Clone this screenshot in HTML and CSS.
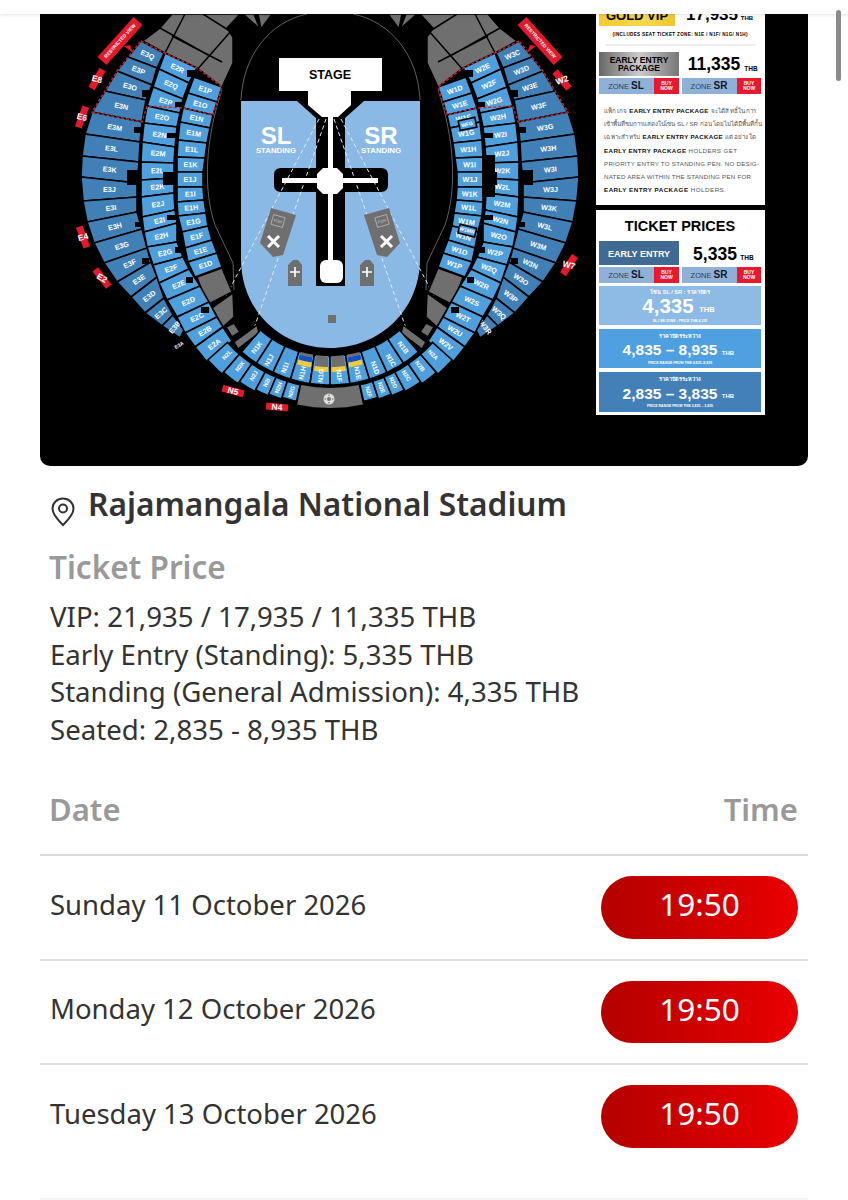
FILE: index.html
```html
<!DOCTYPE html>
<html lang="en">
<head>
  <meta charset="UTF-8" />
  <meta name="viewport" content="width=device-width, initial-scale=1.0"/>
  <title>Rajamangala National Stadium</title>
  <link rel="stylesheet" href="styles.css">
</head>
<body>

<div class="topbar"></div>
<div class="scroll-thumb"></div>

<div class="container">
  <div class="seatmap">
    <svg class="map-svg" viewBox="40 14 768 452" width="768" height="452">
      <defs>
        <linearGradient id="gold" x1="0" x2="1" y1="0" y2="0">
          <stop offset="0" stop-color="#f7c92e"/><stop offset="0.6" stop-color="#f6d94e"/><stop offset="1" stop-color="#efc52f"/>
        </linearGradient>
        <linearGradient id="silver" x1="0" x2="1" y1="0" y2="0">
          <stop offset="0" stop-color="#666"/><stop offset="0.5" stop-color="#ccc"/><stop offset="1" stop-color="#777"/>
        </linearGradient>
      </defs>

      <!-- field -->
      <path class="field" d="M241 101H297L316 118V168H281Q274 168 274 175V185Q274 192 281 192H316V286H345V192H381Q388 192 388 185V175Q388 168 381 168H345V118L364 101H420V259C420 310 380 348 330 348C280 348 241 310 241 259Z"/>
      <path class="oval" d="M241 100C243 55 270 22 307 14M420 100C418 55 391 22 353 14"/>
      <path class="oval" d="M222 90C205 140 203 190 215 225L233 263L234 290M438 90C455 140 457 190 445 225L427 263L426 290"/>

      <!-- dashed lines from stage -->
      <path class="dash" d="M319 119L217 313M326 119L250 340M341 119L443 313M334 119L410 340"/>

      <!-- stage and catwalks -->
      <path class="white" d="M279 58H382V91H351V105L338 117H322L308 105V91H279Z"/>
      <rect class="white" x="282" y="178" width="96" height="5"/>
      <rect class="white" x="328" y="117" width="5" height="145"/>
      <path class="white" d="M323 168H337L343 174V188L337 194H323L317 188V174Z"/>
      <rect class="white" x="320" y="260" width="23" height="23" rx="6"/>
      <text class="t-stage" x="330" y="78.500">STAGE</text>

      <text class="t-zone" x="276" y="144">SL</text>
      <text class="t-standing" x="276" y="152.500">STANDING</text>
      <text class="t-zone" x="381" y="144">SR</text>
      <text class="t-standing" x="381" y="152.500">STANDING</text>

      <!-- foh towers -->
      <path class="grey" d="M271 208L296 215L283 255L273 257L260 243Z"/>
      <rect class="foh-box" x="272" y="216" width="12" height="10" transform="rotate(16 278 221)"/>
      <text class="t-foh" x="278" y="222.500" transform="rotate(16 278 221)">FOH</text>
      <path class="cross" d="M268 236L279 247M279 236L268 247"/>
      <path class="grey" d="M389 208L364 215L377 255L387 257L400 243Z"/>
      <rect class="foh-box" x="376" y="216" width="12" height="10" transform="rotate(-16 382 221)"/>
      <text class="t-foh" x="382" y="222.500" transform="rotate(-16 382 221)">FOH</text>
      <path class="cross" d="M381 236L392 247M392 236L381 247"/>

      <path class="grey" d="M288 265L293 260H298L302 265V286H288Z"/>
      <path class="cross thin" d="M295 267V277M290 272H300"/>
      <path class="grey" d="M360 265L365 260H370L374 265V286H360Z"/>
      <path class="cross thin" d="M367 267V277M362 272H372"/>
      <rect class="grey" x="328" y="315" width="8" height="8"/>

      <!-- seats and gates go here, see map.js -->
      <g id="seats"></g>

      <!-- side panel, upper -->
      <rect class="white" x="596" y="14" width="169" height="191"/>
      <rect x="599" y="14" width="76" height="12" fill="url(#gold)"/>
      <text class="t-mid t-b" x="637" y="20" font-size="13">GOLD VIP</text>
      <text class="t-mid t-b" x="712" y="20" font-size="17">17,935</text>
      <text class="t-mid t-b" x="747" y="20" font-size="6">THB</text>
      <text class="t-mid t-b" x="680" y="36" font-size="4.600" textLength="135">(INCLUDES SEAT TICKET ZONE: N1E / N1F/ N1G/ N1H)</text>
      <rect x="605" y="44.500" width="151" height="1" fill="#ddd"/>
      <rect x="599" y="52" width="80" height="24" fill="url(#silver)"/>
      <text class="t-mid t-b" x="639" y="63" font-size="8.500">EARLY ENTRY</text>
      <text class="t-mid t-b" x="639" y="71" font-size="8.500">PACKAGE</text>
      <text class="t-mid t-b" x="714" y="70" font-size="17.500">11,335</text>
      <text class="t-mid t-b" x="751" y="71" font-size="6.500">THB</text>
      <rect class="zone" x="599" y="78" width="55" height="16"/>
      <text class="t-mid t-zoneword" x="626" y="89">ZONE <tspan class="t-zonename">SL</tspan></text>
      <rect class="buy" x="654" y="78" width="25" height="16"/>
      <text class="t-buy" x="666.500" y="85">BUY</text>
      <text class="t-buy" x="666.500" y="90">NOW</text>
      <rect class="zone" x="682" y="78" width="55" height="16"/>
      <text class="t-mid t-zoneword" x="709" y="89">ZONE <tspan class="t-zonename">SR</tspan></text>
      <rect class="buy" x="737" y="78" width="24" height="16"/>
      <text class="t-buy" x="749" y="85">BUY</text>
      <text class="t-buy" x="749" y="90">NOW</text>

      <text class="t-para" x="604" y="113" textLength="152">แพ็กเกจ <tspan class="t-b">EARLY ENTRY PACKAGE</tspan> จะได้สิทธิ์ในการ</text>
      <text class="t-para" x="604" y="126" textLength="158">เข้าพื้นที่ชมการแสดงในโซน SL / SR ก่อน โดยไม่ได้มีพื้นที่กั้น</text>
      <text class="t-para" x="604" y="139" textLength="152">เฉพาะสำหรับ <tspan class="t-b">EARLY ENTRY PACKAGE</tspan> แต่อย่างใด</text>
      <text class="t-para" x="604" y="152.500" textLength="133"><tspan class="t-b">EARLY ENTRY PACKAGE</tspan> HOLDERS GET</text>
      <text class="t-para" x="604" y="166" textLength="155">PRIORITY ENTRY TO STANDING PEN. NO DESIG-</text>
      <text class="t-para" x="604" y="179" textLength="147">NATED AREA WITHIN THE STANDING PEN FOR</text>
      <text class="t-para" x="604" y="192" textLength="122"><tspan class="t-b">EARLY ENTRY PACKAGE</tspan>  HOLDERS.</text>

      <!-- side panel, ticket prices -->
      <rect class="white" x="596" y="210" width="169" height="205"/>
      <text class="t-mid t-b" x="680" y="231" font-size="14.500">TICKET PRICES</text>
      <rect x="599" y="241" width="80" height="24" fill="#3f6a94"/>
      <text class="t-mid t-b t-w" x="639" y="256.500" font-size="9">EARLY ENTRY</text>
      <text class="t-mid t-b" x="715" y="260" font-size="17.500">5,335</text>
      <text class="t-mid t-b" x="747" y="260" font-size="6.500">THB</text>
      <rect class="zone" x="599" y="267" width="55" height="16"/>
      <text class="t-mid t-zoneword" x="626" y="278">ZONE <tspan class="t-zonename">SL</tspan></text>
      <rect class="buy" x="654" y="267" width="25" height="16"/>
      <text class="t-buy" x="666.500" y="274">BUY</text>
      <text class="t-buy" x="666.500" y="279">NOW</text>
      <rect class="zone" x="682" y="267" width="55" height="16"/>
      <text class="t-mid t-zoneword" x="709" y="278">ZONE <tspan class="t-zonename">SR</tspan></text>
      <rect class="buy" x="737" y="267" width="24" height="16"/>
      <text class="t-buy" x="749" y="274">BUY</text>
      <text class="t-buy" x="749" y="279">NOW</text>

      <rect x="599" y="286" width="162" height="39" fill="#8dbbe6"/>
      <text class="t-mid t-b t-w" x="680" y="294" font-size="5.500">โซน SL / SR : ราคาบัตร</text>
      <text class="t-mid t-b t-w" x="668" y="313" font-size="20.500">4,335</text>
      <text class="t-mid t-b t-w" x="707" y="312" font-size="7.500">THB</text>
      <text class="t-mid t-b t-w" x="680" y="321.500" font-size="3.500">SL / SR ZONE : PRICE THB 4,335</text>

      <rect x="599" y="329" width="162" height="39" fill="#4fa0e0"/>
      <text class="t-mid t-b t-w" x="680" y="338" font-size="5.500">ราคาบัตรระหว่าง</text>
      <text class="t-mid t-b t-w" x="670" y="355" font-size="15.500">4,835 – 8,935</text>
      <text class="t-mid t-b t-w" x="728" y="354.500" font-size="6">THB</text>
      <text class="t-mid t-b t-w" x="680" y="364" font-size="3.500">PRICE RANGE FROM THB 4,835–8,935</text>

      <rect x="599" y="372" width="162" height="40" fill="#4480b8"/>
      <text class="t-mid t-b t-w" x="680" y="381" font-size="5.500">ราคาบัตรระหว่าง</text>
      <text class="t-mid t-b t-w" x="670" y="398.500" font-size="15.500">2,835 – 3,835</text>
      <text class="t-mid t-b t-w" x="728" y="398" font-size="6">THB</text>
      <text class="t-mid t-b t-w" x="680" y="407" font-size="3.500">PRICE RANGE FROM THB 2,835 – 3,835</text>
    </svg>
  </div>

  <div class="venue">
    <svg class="pin" viewBox="0 0 24 30" width="24" height="30">
      <path d="M12 1.500C6 1.500 1.500 6 1.500 11.500C1.500 18 8 24 12 28C16 24 22.500 18 22.500 11.500C22.500 6 18 1.500 12 1.500Z" fill="none" stroke="#333" stroke-width="2"/>
      <circle cx="12" cy="11.500" r="4" fill="none" stroke="#333" stroke-width="2"/>
    </svg>
    <h1>Rajamangala National Stadium</h1>
  </div>

  <div class="prices">
    <h2>Ticket Price</h2>
    <p>VIP: 21,935 / 17,935 / 11,335 THB</p>
    <p>Early Entry (Standing): 5,335 THB</p>
    <p>Standing (General Admission): 4,335 THB</p>
    <p>Seated: 2,835 - 8,935 THB</p>
  </div>

  <div class="shows">
    <div class="show-head"><span>Date</span><span>Time</span></div>
    <div class="show-row"><span>Sunday 11 October 2026</span><a class="time-btn">19:50</a></div>
    <div class="show-row"><span>Monday 12 October 2026</span><a class="time-btn">19:50</a></div>
    <div class="show-row last"><span>Tuesday 13 October 2026</span><a class="time-btn">19:50</a></div>
  </div>
</div>

<script src="map.js"></script>
</body>
</html>
```

FILE: styles.css
```css
body {
  font-family: "Noto Sans", "Open Sans", sans-serif;
  background-color: #fff;
  color: #333;
  margin: 0;
  padding: 0;
}

.topbar {
  height: 14px;
  background: #fff;
  box-shadow: 0 1px 3px rgba(0,0,0,0.12);
  position: relative;
  z-index: 2;
}

.scroll-thumb {
  position: absolute;
  top: 10px;
  left: 836px;
  width: 5px;
  height: 71px;
  border-radius: 3px;
  background: #8a8a8a;
  z-index: 3;
}

.container {
  padding: 0 40px;
}

.seatmap {
  height: 452px;
  background: #000;
  border-radius: 0 0 10px 10px;
  overflow: hidden;
}

.map-svg {
  display: block;
}

/* map shapes */
.field { fill: #8bb9e6; }
.white { fill: #fff; }
.grey { fill: #6f6f6f; }
.oval { fill: none; stroke: #777; stroke-width: 0.8; }
.dash { fill: none; stroke: #dfeaf5; stroke-width: 1; stroke-dasharray: 4 3; }
.cross { fill: none; stroke: #fff; stroke-width: 3; }
.cross.thin { stroke-width: 1.6; }
.foh-box { fill: none; stroke: #ccc; stroke-width: 0.6; }
.sec1 { fill: #4f9fdc; stroke: #000; stroke-width: 1.6; }
.sec3 { fill: #4180b7; stroke: #000; stroke-width: 1.6; }
.block { fill: #6f6f6f; stroke: #000; stroke-width: 1.5; }
.notch { fill: #000; }
.redline { fill: none; stroke: #d3202a; stroke-width: 1.4; stroke-dasharray: 3 2; }
.gate { fill: #e3192c; }
.zone { fill: #8fb1d8; }
.buy { fill: #e8192c; }

/* map text */
svg text {
  font-family: "Liberation Sans", Arial, sans-serif;
}

.lbl {
  fill: #fff;
  font-size: 7.200px;
  font-weight: bold;
  text-anchor: middle;
  dominant-baseline: central;
}

.lbl.row1 { font-size: 6.800px; }
.lbl.row2 { font-size: 5.800px; }
.lbl.small { font-size: 5px; }
.gate-lbl { font-size: 8.500px; }
.tag-lbl { font-size: 4.800px; }

.t-stage { font-size: 12.500px; font-weight: bold; text-anchor: middle; }
.t-zone { font-size: 24px; font-weight: bold; fill: #fff; text-anchor: middle; }
.t-standing { font-size: 7.800px; font-weight: bold; fill: #fff; text-anchor: middle; }
.t-foh { font-size: 4px; fill: #ccc; text-anchor: middle; }
.t-mid { text-anchor: middle; }
.t-b { font-weight: bold; }
.t-w { fill: #fff; }
.t-zoneword { font-size: 7.500px; fill: #333c55; }
.t-zonename { font-size: 10px; font-weight: bold; fill: #111827; }
.t-buy { font-size: 5px; font-weight: bold; fill: #fff; text-anchor: middle; }
.t-para { font-size: 6.200px; fill: #555; }
.t-para .t-b { fill: #111; }

/* text below the map */
.venue {
  display: flex;
  align-items: flex-start;
  gap: 13px;
  padding: 19px 0 0 11px;
}

.venue .pin {
  margin-top: 12px;
}

.venue h1 {
  margin: 0;
  font-size: 31.700px;
  line-height: 38px;
  font-weight: 600;
}

.prices {
  padding: 0 10px;
  margin-top: 19px;
}

.prices h2 {
  margin: 0 0 10px -1px;
  font-size: 31.500px;
  line-height: 42px;
  font-weight: 600;
  color: #999;
}

.prices p {
  margin: 0;
  font-size: 27.600px;
  line-height: 37.500px;
}

.shows {
  margin-top: 40px;
}

.show-head {
  display: flex;
  justify-content: space-between;
  padding: 0 10px 0 9px;
  height: 66px;
  font-size: 31px;
  line-height: 42px;
  font-weight: 600;
  color: #999;
  border-bottom: 2px solid #ddd;
}

.show-row {
  display: flex;
  justify-content: space-between;
  align-items: center;
  padding: 20px 10px;
  font-size: 27.500px;
  border-bottom: 2px solid #ddd;
}

.show-row span {
  margin-bottom: 6px;
}

.show-row.last {
  padding-bottom: 50px;
  border-bottom-color: #f3f3f3;
}

.time-btn {
  display: block;
  width: 197px;
  height: 62.500px;
  line-height: 55px;
  border-radius: 32px;
  background: linear-gradient(90deg, #b40000, #ea0000);
  color: #fff;
  font-size: 31.500px;
  text-align: center;
}
```

FILE: map.js
```js
// seat map drawn from rung points: [outer x, outer y, inner x, inner y]
const svgNS = "http://www.w3.org/2000/svg";
const seats = document.getElementById("seats");

function add(tag, attrs, text) {
  const node = document.createElementNS(svgNS, tag);
  for (const k in attrs) node.setAttribute(k, attrs[k]);
  if (text) node.textContent = text;
  seats.appendChild(node);
  return node;
}

const tier3 = [
  [141,41,164,53],[128,57,157,68],[117,71,152,85],[105,91,146,100],[92,112,142,122],
  [85,134,140,142],[82,156,139,162],[81,177,137,183],[83,201,137,197],[87,222,137,212],
  [94,243,142,229],[104,263,147,248],[117,282,151,262],[131,297,157,277],[145,313,164,298],
  [162,326,173,315],[180,338,184,330]
];
const tier2 = [
  [165,53,197,68],[159,69,189,83],[153,87,183,99],[147,106,180,113],[144,123,177,127],
  [142,142,175,147],[141,162,174,163],[141,180,174,178],[141,197,174,193],[142,217,175,210],
  [144,232,177,223],[147,247,177,242],[153,265,183,257],[159,283,189,269],[167,300,200,286],
  [177,317,209,302],[185,333,217,317],[195,347,223,327],[207,362,232,341]
];
const tier1 = [
  [194,77,222,87],[188,93,217,102],[183,108,213,115],[180,122,210,128],[178,140,207,143],
  [177,157,205,158],[177,172,203,172],[177,187,203,187],[177,202,204,200],[178,216,206,213],
  [182,232,208,226],[185,248,212,240],[188,262,217,253],[195,277,222,267]
];

const labels = {
  E3: "QPONMLKJIHGFEDCB", W3: "CDEFGHIJKLMNOPQR",
  E2: "RQPONMLKJIHGFEDCBA", W2: "EFGHIJKLMNOPQRSTUV",
  E1: "PONMLKJIHGFED", W1: "DEFGHIJKLMNOP"
};

const notches = [
  [134,127,8,6],[127,170,12,15],[163,172,14,13],[187,70,8,7],[175,102,8,5],[167,133,10,5],
  [167,215,10,5],[135,222,7,5],[142,90,8,7],[175,247,8,6],[142,258,7,6],[186,277,7,6],[201,307,8,6]
];

const blocks = [
  "143,41 160,28 172,14 240,14 227,28 233,37 233,63 222,87 197,68 165,53",
  "243,14 254,14 260,29",
  "258,14 272,14 261,29",
  "197,277 222,268 232,292 207,305",
  "212,308 233,293 234,317 223,327",
  "226,327 234,323 240,332 232,337",
  "234,342 257,325 259,333 238,349"
];

const blockLines = "M160 28L208 55M185 14L165 53M203 14L233 33M232 30L195 72M172 36L222 62";

const redPath = [[141,41],[165,53],[197,68],[222,87],[213,115],[183,108],[147,106],[142,122],[92,112],[105,91],[117,71],[128,57],[141,41]];

function drawTier(rungs, cls, names, prefix, mirror) {
  const mx = x => (mirror ? 660 - x : x);
  for (let i = 0; i < rungs.length - 1; i++) {
    const a = rungs[i], b = rungs[i + 1];
    const pts = [[a[0],a[1]],[a[2],a[3]],[b[2],b[3]],[b[0],b[1]]].map(p => mx(p[0]) + "," + p[1]).join(" ");
    add("polygon", { class: cls, points: pts });
    const cx = mx((a[0] + a[2] + b[0] + b[2]) / 4);
    const cy = (a[1] + a[3] + b[1] + b[3]) / 4;
    const dy = (a[3] - a[1] + b[3] - b[1]) / 2;
    const dx = (a[2] - a[0] + b[2] - b[0]) / 2;
    let ang = Math.atan2(dy, dx) * 180 / Math.PI;
    if (mirror) ang = -ang;
    add("text", { class: "lbl", x: cx, y: cy, transform: `rotate(${ang} ${cx} ${cy})` }, prefix + names[i]);
  }
}

function drawSide(mirror) {
  const mx = x => (mirror ? 660 - x : x);
  blocks.forEach(b => {
    const pts = b.split(" ").map(p => { const v = p.split(","); return mx(+v[0]) + "," + v[1]; }).join(" ");
    add("polygon", { class: "block", points: pts });
  });
  const lines = blockLines.replace(/M(\d+) (\d+)L(\d+) (\d+)/g, (m, a, b, c, d) => `M${mx(+a)} ${b}L${mx(+c)} ${d}`);
  add("path", { d: lines, fill: "none", stroke: "#000", "stroke-width": 1.5 });

  const s = mirror ? "W" : "E";
  drawTier(tier3, "sec3", labels[s + "3"], s + "3", mirror);
  drawTier(tier2, "sec1", labels[s + "2"], s + "2", mirror);
  drawTier(tier1, "sec1", labels[s + "1"], s + "1", mirror);

  notches.forEach(n => {
    add("rect", { class: "notch", x: mirror ? 660 - n[0] - n[2] : n[0], y: n[1], width: n[2], height: n[3] });
  });
  add("polyline", { class: "redline", points: redPath.map(p => mx(p[0]) + "," + p[1]).join(" ") });

  // restricted view tag
  const cx = mx(120), rot = mirror ? 48 : -48;
  add("polygon", { class: "gate", points: `${mx(124)},46 ${mx(133)},53 ${mx(130)},45` });
  add("rect", { class: "gate", x: cx - 27, y: 35, width: 54, height: 12, transform: `rotate(${rot} ${cx} 41)` });
  add("text", { class: "lbl tag-lbl", x: cx, y: 41, transform: `rotate(${rot} ${cx} 41)` }, "RESTRICTED VIEW");
}

drawSide(false);
drawSide(true);

// right side extras
add("rect", { class: "notch", x: 482, y: 155, width: 13, height: 42 });
add("rect", { class: "sec1", x: 459, y: 119, width: 17, height: 10, transform: "rotate(-12 467 124)" });
add("text", { class: "lbl small", x: 467, y: 124, transform: "rotate(-12 467 124)" }, "WFG");
add("rect", { class: "sec1", x: 459, y: 226, width: 17, height: 9, transform: "rotate(14 467 230)" });
add("text", { class: "lbl small", x: 467, y: 230, transform: "rotate(14 467 230)" }, "W1MN");
add("text", { class: "lbl small", x: 179, y: 345, transform: "rotate(-30 179 345)" }, "E3A");

// bottom rows, polar around the pitch
const pt = (r, t) => {
  const a = t * Math.PI / 180;
  return [330 - r * Math.sin(a), 250 + r * Math.cos(a)];
};

function wedge(r1, r2, t1, t2, cls, fill) {
  const pts = [];
  for (let i = 0; i <= 4; i++) pts.push(pt(r1, t1 + (t2 - t1) * i / 4));
  for (let i = 4; i >= 0; i--) pts.push(pt(r2, t1 + (t2 - t1) * i / 4));
  const attrs = { points: pts.map(p => p.join(",")).join(" ") };
  if (cls) attrs.class = cls;
  if (fill) attrs.fill = fill;
  add("polygon", attrs);
}

function wedgeLabel(r, t, text, cls) {
  const p = pt(r, t);
  const ang = t >= 0 ? -(90 - t) : 90 + t;
  add("text", { class: "lbl " + cls, x: p[0], y: p[1], transform: `rotate(${ang} ${p[0]} ${p[1]})` }, text);
}

const n1 = [["K",41,33],["J",33,25],["I",25,17],["H",17,8.5],["G",8.5,0],["F",0,-8.5],["E",-8.5,-17],["D",-17,-25],["C",-25,-33],["B",-33,-41]];
n1.forEach(s => {
  wedge(106, 135, s[1], s[2], "sec1");
  const i = s[1] > 0 ? s[1] - 1 : s[1] - 0.8, j = s[2] > 0 ? s[2] + 0.8 : s[2] + 1;
  if (s[0] === "H" || s[0] === "E") {
    wedge(106, 109, i, j, null, "#6f6f6f");
    wedge(109, 114, i, j, null, "#1750c4");
    wedge(114, 119, i, j, null, "#f2ca3c");
  }
  if (s[0] === "G" || s[0] === "F") {
    wedge(106, 117, i, j, null, "#6f6f6f");
    wedge(117, 122, i, j, null, "#f2ca3c");
  }
  wedgeLabel(s[0] === "K" || s[0] === "B" ? 122 : 126, (s[1] + s[2]) / 2, "N1" + s[0], "row1");
});

const n2 = [["L",48,41],["K",41,34.5],["J",34.5,28],["I",28,23],["H",23,18],["G",18,12.5],["F",-18,-12.5],["E",-23,-18],["D",-28,-23],["C",-34.5,-28],["B",-41,-34.5],["A",-48,-41]];
n2.forEach(s => {
  const m = Math.abs((s[1] + s[2]) / 2);
  const outer = 154 + (m - 12) * 0.32;
  wedge(138, outer, s[1], s[2], "sec1");
  wedgeLabel(147, (s[1] + s[2]) / 2, "N2" + s[0], "row2");
});

wedge(138, 158, 12, -12, null, "#6f6f6f");
add("circle", { cx: 329, cy: 399, r: 5.5, fill: "#ddd" });
add("circle", { cx: 329, cy: 399, r: 2, fill: "#777" });
[[-3.8,0],[3.8,0],[0,-3.8],[0,3.8]].forEach(d => {
  add("circle", { cx: 329 + d[0], cy: 399 + d[1], r: 0.8, fill: "#777" });
});

// gate tags: x, y, bar angle, text angle, name
const gates = [
  [97,79,-60,15,"E8"],[82,117,-70,15,"E6"],[83,237,70,-15,"E4"],[102,278,52,30,"E2"],
  [233,391,15,15,"N5"],[277,407,5,5,"N4"],[562,80,50,-20,"W2"],[569,265,-57,15,"W7"]
];
gates.forEach(g => {
  add("rect", { class: "gate", x: g[0] - 11, y: g[1] - 3.5, width: 22, height: 7, transform: `rotate(${g[2]} ${g[0]} ${g[1]})` });
  add("text", { class: "lbl gate-lbl", x: g[0], y: g[1], transform: `rotate(${g[3]} ${g[0]} ${g[1]})` }, g[4]);
});
```
